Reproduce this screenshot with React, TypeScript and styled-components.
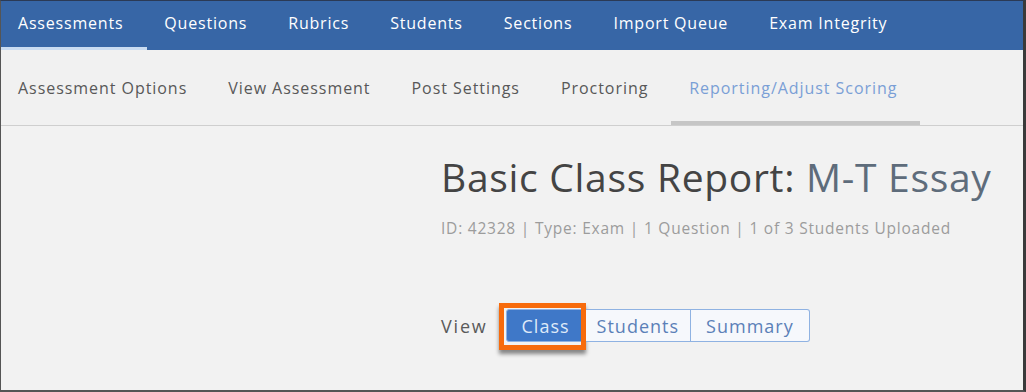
import styled, { createGlobalStyle } from "styled-components";

const GlobalStyle = createGlobalStyle`
  html, body {
    margin: 0;
    padding: 0;
    background: #f2f2f2;
  }
  body {
    font-family: "Open Sans", "Liberation Sans", sans-serif;
  }
`;

const Frame = styled.div`
  width: 1026px;
  height: 392px;
  box-sizing: border-box;
  border-top: 1px solid #2b3a55;
  border-left: 1px solid #555;
  border-right: 3px solid #3a3a3a;
  border-bottom: 2px solid #555;
  background: #f2f2f2;
  overflow: hidden;
  display: flex;
  flex-direction: column;
`;

const TopNav = styled.nav`
  display: flex;
  height: 49px;
  background: #3766a6;
  flex-shrink: 0;
`;

const TopTab = styled.div<{ $active?: boolean }>`
  display: flex;
  align-items: center;
  padding: 0 24px 5px 17px;
  font-size: 16px;
  letter-spacing: 0.8px;
  color: #fff;
  box-shadow: ${(p) => (p.$active ? "inset 0 -3px 0 #c9dcf2" : "none")};
`;

const SubNav = styled.nav`
  display: flex;
  height: 75px;
  border-bottom: 1px solid #cfcfcf;
  background: #f1f1f1;
  flex-shrink: 0;
`;

const SubTab = styled.div<{ $active?: boolean }>`
  display: flex;
  align-items: center;
  padding: 0 23px 0 18px;
  font-size: 16px;
  letter-spacing: 0.95px;
  color: ${(p) => (p.$active ? "#7a9fd6" : "#585858")};
  box-shadow: ${(p) => (p.$active ? "inset 0 -4px 0 #c6c6c6" : "none")};

  &:first-child {
    padding-left: 17px;
  }
`;

const Main = styled.main`
  padding: 25px 0 0 440px;
  display: flex;
  flex-direction: column;
`;

const Title = styled.h1`
  margin: 0;
  font-weight: 400;
  font-size: 39px;
  line-height: 52px;
  color: #444;
  white-space: nowrap;
  letter-spacing: 0.7px;
`;

const TitleName = styled.span`
  color: #5e6c7b;
`;

const Meta = styled.div`
  margin-top: 14px;
  font-size: 15.5px;
  letter-spacing: 0.78px;
  color: #9c9c9c;
  white-space: nowrap;
`;

const ViewRow = styled.div`
  margin-top: 70px;
  display: flex;
  align-items: center;
  gap: 18px;
`;

const ViewLabel = styled.span`
  font-size: 18px;
  letter-spacing: 1.8px;
  color: #5a5a5a;
`;

const ButtonGroup = styled.div`
  display: flex;
  height: 33px;
`;

const SegButton = styled.div<{ $active?: boolean; $last?: boolean }>`
  position: relative;
  display: flex;
  align-items: center;
  padding: 0 ${(p) => (p.$active || p.$last ? 15 : 11)}px;
  font-size: 18px;
  letter-spacing: 1px;
  color: ${(p) => (p.$active ? "#dfeaf8" : "#5b80b8")};
  background: ${(p) => (p.$active ? "#3f78c8" : "#f6f8fc")};
  border: 1px solid #8fb2e2;
  border-left-width: ${(p) => (p.$active ? "1px" : "0")};
  border-radius: ${(p) => (p.$last ? "0 3px 3px 0" : p.$active ? "3px 0 0 3px" : "0")};
`;

const Highlight = styled.div`
  position: absolute;
  top: -7px;
  left: -8px;
  right: -1px;
  bottom: -9px;
  border: 5px solid #f76b0c;
  box-shadow: 0 4px 4px rgba(0, 0, 0, 0.45);
  pointer-events: none;
`;

const topTabs = [
  "Assessments",
  "Questions",
  "Rubrics",
  "Students",
  "Sections",
  "Import Queue",
  "Exam Integrity",
];

const subTabs = [
  "Assessment Options",
  "View Assessment",
  "Post Settings",
  "Proctoring",
  "Reporting/Adjust Scoring",
];

export default function App() {
  return (
    <>
      <GlobalStyle />
      <Frame>
        <TopNav>
          {topTabs.map((t, i) => (
            <TopTab key={t} $active={i === 0}>
              {t}
            </TopTab>
          ))}
        </TopNav>
        <SubNav>
          {subTabs.map((t, i) => (
            <SubTab key={t} $active={i === subTabs.length - 1}>
              {t}
            </SubTab>
          ))}
        </SubNav>
        <Main>
          <Title>
            Basic Class Report: <TitleName>M-T Essay</TitleName>
          </Title>
          <Meta>ID: 42328 | Type: Exam | 1 Question | 1 of 3 Students Uploaded</Meta>
          <ViewRow>
            <ViewLabel>View</ViewLabel>
            <ButtonGroup>
              <SegButton $active>
                Class
                <Highlight />
              </SegButton>
              <SegButton>Students</SegButton>
              <SegButton $last>Summary</SegButton>
            </ButtonGroup>
          </ViewRow>
        </Main>
      </Frame>
    </>
  );
}
